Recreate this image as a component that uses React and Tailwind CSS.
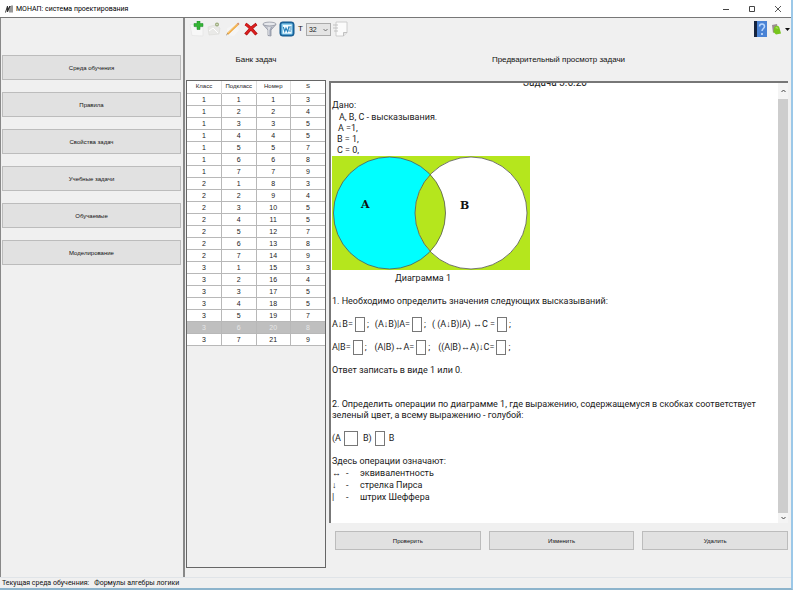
const menu = [
  "Среда обучения",
  "Правила",
  "Свойства задач",
  "Учебные задачи",
  "Обучаемые",
  "Моделирование",
];

const scores = [3, 4, 5, 5, 7, 8, 9];
const tasks = Array.from({ length: 21 }, (_, i) => ({
  group: Math.floor(i / 7) + 1,
  sub: (i % 7) + 1,
  number: i + 1,
  s: scores[i % 7],
}));

const selectedTask = 20;

function TitleBar() {
  return (
    <header className="flex h-[17px] shrink-0 items-center bg-white pl-[5px]">
      <svg className="h-2 w-2" viewBox="0 0 8 8" fill="none" stroke="#333" aria-hidden="true">
        <path d="M.5 7.500 2.500 1v6L5 1v6.500M2.500 5 5 1M7 .5v7" strokeWidth="1" />
      </svg>
      <h1 className="ml-[3px] font-['Roboto',sans-serif] text-[7px] leading-[10px] text-black">
        МОНАП: система проектирования
      </h1>
      <div className="ml-auto flex items-center">
        <button aria-label="Свернуть" className="flex h-4 w-[26px] items-center justify-center">
          <svg className="h-2 w-2" viewBox="0 0 8 8" stroke="#444" aria-hidden="true">
            <path d="M1 4.500h6" />
          </svg>
        </button>
        <button aria-label="Развернуть" className="flex h-4 w-[26px] items-center justify-center">
          <svg className="h-2 w-2" viewBox="0 0 8 8" fill="none" stroke="#444" aria-hidden="true">
            <path d="M1.500 1.500h5v5h-5z" />
          </svg>
        </button>
        <button aria-label="Закрыть" className="flex h-4 w-[26px] items-center justify-center">
          <svg className="h-2 w-2" viewBox="0 0 8 8" stroke="#444" strokeWidth=".9" aria-hidden="true">
            <path d="m1 1 6 6m0-6-6 6" />
          </svg>
        </button>
      </div>
    </header>
  );
}

function Tool({ label, children }) {
  return (
    <button aria-label={label} className="h-4 w-4">
      <svg className="h-4 w-4" viewBox="0 0 16 16" fill="none" aria-hidden="true">
        {children}
      </svg>
    </button>
  );
}

function Toolbar() {
  return (
    <div className="flex h-[22px] items-center pl-1 pr-px">
      <div className="flex items-center gap-[2px]">
        <Tool label="Добавить">
          <path d="M1 3.500h5v3h8V15L3 14.500z" fill="#f7f7f7" stroke="#e2e2e2" strokeWidth=".6" />
          <path d="M8 0h3v2.500h3v3h-3V8.500H8v-3H5v-3h3z" fill="#35b535" stroke="#168a25" strokeWidth=".5" />
        </Tool>
        <Tool label="Открыть">
          <path d="M1 6 8 4l5 3-1 6-10 1z" fill="#e9e9e7" stroke="#dadad6" strokeWidth=".6" />
          <path d="m2 10 4-3 5 5" stroke="#fff" />
          <circle cx="10" cy="3.500" r="2" fill="#9cab7c" />
          <circle cx="10" cy="3.500" r=".8" fill="#e4ebd8" />
        </Tool>
        <Tool label="Править">
          <path d="M2 7.500 10 3l4 6-5 6-7-1z" fill="#f5f5f5" />
          <path d="M2.500 13 12.500 3.500" stroke="#efa63c" strokeWidth="2.200" />
          <path d="m3 12 9.500-9" stroke="#fbe0a4" strokeWidth=".6" />
          <path d="m12.500 3.500 1.300-1.200" stroke="#d58b63" strokeWidth="2" />
          <path d="m1.300 14 1.500-1.300" stroke="#8a8177" />
        </Tool>
        <Tool label="Удалить задачу">
          <path d="M2.500 3c3 2 7 6 11 10.500M13.500 3C9.500 5.500 6 9 2.500 13.500" stroke="#a80d0d" strokeWidth="3.200" />
          <path d="M2.500 3.200c3 2 7 6 10.500 10M13 3.300C9.500 6 6 9 3 13" stroke="#dc1f1f" strokeWidth="2" />
        </Tool>
        <Tool label="Фильтр">
          <path d="M2 3.500 7 9v5.500L10 15V9l5-5.500z" fill="#c6c9d1" stroke="#7e8493" strokeWidth=".7" />
          <ellipse cx="8.500" cy="3" rx="6.500" ry="1.900" fill="#e6e8ec" stroke="#868b98" strokeWidth=".7" />
          <path d="M8 6v8" stroke="#f2f3f5" />
          <path d="m11 6-2 3v5" stroke="#8389a0" strokeWidth=".7" />
        </Tool>
        <Tool label="Экспорт в Word">
          <rect x="1" y="1" width="14" height="14" rx="2.500" fill="#1d6ea9" stroke="#11568b" />
          <rect x="2.500" y="2.500" width="11" height="11" rx="1" fill="#8fd0ee" />
          <path d="M4 4h8.500v8.500H4z" fill="#f2fbff" />
          <path d="m4.300 6 1.500 4.500L7 7l1.500 3.500L10 6M9 6h3.500M10.500 8h2m-3 2h2.500" stroke="#2682bb" strokeWidth="1.100" />
        </Tool>
      </div>
      <label htmlFor="size" className="ml-[3px] text-[8px] leading-[10px] text-[#222]">T</label>
      <div className="relative ml-[3px]">
        <select
          id="size"
          defaultValue="32"
          className="block h-[13px] w-[25px] appearance-none border border-[#aaa] bg-[#e4e4e4] pl-[2px] text-[7px] leading-[11px] text-[#222]"
        >
          <option>32</option>
        </select>
        <svg className="pointer-events-none absolute right-[3px] top-[5px] h-1 w-[5px]" viewBox="0 0 5 4" fill="none" stroke="#555" strokeWidth=".8" aria-hidden="true">
          <path d="m.5 1 2 2 2-2" />
        </svg>
      </div>
      <div className="ml-px flex">
        <Tool label="Документ">
          <path d="M4 1h11v10.500L11.500 15H4z" fill="#fbfbfb" stroke="#c4c4c4" strokeWidth=".8" />
          <path d="M11.500 15v-3.500H15" fill="#e4e4e4" stroke="#b5b5b5" strokeWidth=".8" />
          <path d="M1 4h5M1 7h5M2 10h4" stroke="#c2c2c2" />
        </Tool>
      </div>
      <div className="ml-auto flex items-center">
        <button aria-label="Справка">
          <svg className="h-4 w-[13px]" viewBox="0 0 13 16" aria-hidden="true">
            <path d="M0 0h13v16H0z" fill="#4a83d5" />
            <path d="M0 0h3v16H0z" fill="#15233d" />
            <path d="M5.500 5.500C5.500 2 10.500 2 10.500 5.500c0 2-2.500 2-2.500 4.500" fill="none" stroke="#b9d8ff" strokeWidth="1.500" />
            <circle cx="8" cy="13" r="1" fill="#d8eaff" />
          </svg>
        </button>
        <button aria-label="Выход" className="ml-1 flex items-center gap-1">
          <svg className="h-3 w-[10px]" viewBox="0 0 10 12" aria-hidden="true">
            <path d="M1 2 6 1l1 6-5 3z" fill="#9b8d91" />
            <path d="M3 5c1-3 5-3 5.500 0L10 10.500 5 11.500 2.500 9z" fill="#77c51c" />
            <path d="m4 5 2-1.500L7.500 6" fill="#a8df57" />
          </svg>
          <svg className="h-[3px] w-[5px]" viewBox="0 0 5 3" aria-hidden="true">
            <path d="M0 0h5L2.500 3z" fill="#111" />
          </svg>
        </button>
      </div>
    </div>
  );
}

function TaskTable() {
  return (
    <div className="flex-1 border border-[#666] bg-[#f0f0f0]">
      <table className="w-full table-fixed border-collapse bg-white text-center text-[7px] leading-[11px] text-[#222]">
        <thead>
          <tr className="h-3 border-b border-[#bbb] text-[6px]">
            {["Класс", "Подкласс", "Номер", "S"].map((name) => (
              <th key={name} className="border-r border-[#ddd] p-0 font-normal last:border-r-0">{name}</th>
            ))}
          </tr>
        </thead>
        <tbody>
          {tasks.map((t) => (
            <tr
              key={t.number}
              className={`h-3 border-b border-[#b8b8b8] ${t.number === selectedTask ? "bg-[#bfbfbf] text-[#e6e6e6]" : ""}`}
            >
              {[t.group, t.sub, t.number, t.s].map((value, i) => (
                <td key={i} className="border-r border-[#b8b8b8] p-0 last:border-r-0">{value}</td>
              ))}
            </tr>
          ))}
        </tbody>
      </table>
    </div>
  );
}

function Venn() {
  return (
    <svg className="h-[114px] w-[198px]" viewBox="0 0 198 114" role="img" aria-label="Диаграмма 1">
      <path d="M0 0h198v114H0z" fill="#b5e61d" />
      <circle cx="57.500" cy="57" r="56" fill="#00ffff" />
      <circle cx="139" cy="57" r="56" fill="#fff" />
      <path d="M98.300 18.600a56 56 0 0 1 0 76.800a56 56 0 0 1 0-76.800z" fill="#b5e61d" />
      <g fill="none" stroke="#555" strokeWidth=".8">
        <circle cx="57.500" cy="57" r="56" />
        <circle cx="139" cy="57" r="56" />
      </g>
      <g fontFamily="DejaVu Serif, serif" fontSize="11" fontWeight="bold" fill="#111">
        <text x="29" y="52">A</text>
        <text x="128" y="53">B</text>
      </g>
    </svg>
  );
}

function Answer({ label, wide }) {
  return (
    <input
      aria-label={label}
      className={`h-[15px] border border-[#777] bg-white text-center text-[9px] ${wide ? "w-[14px]" : "w-[10px]"}`}
    />
  );
}

function Formula({ text }) {
  return (
    <label className="flex items-center gap-[2px] whitespace-pre">
      {text}
      <Answer label={text} />
      <span>;</span>
    </label>
  );
}

function Preview() {
  return (
    <section className="flex min-h-0 flex-1 border-l-2 border-t-2 border-[#777] bg-white">
      <div className="min-w-0 flex-1 overflow-hidden pl-px font-['Roboto','Liberation_Sans',sans-serif] text-[9px] leading-[11px] text-[#1a1a1a]">
        <h3 className="-mt-[6px] text-center text-[10px]">Задача 3.6.20</h3>
        <div className="mt-3">
          <p>Дано:</p>
          <p className="mt-px pl-[7px]">A, B, C - высказывания.</p>
          <p className="pl-[6px]">A =1,</p>
          <p className="pl-[5px]">B = 1,</p>
          <p className="pl-[5px]">C = 0,</p>
        </div>
        <figure className="w-[198px]">
          <Venn />
          <figcaption className="mt-[3px] pr-4 text-center">Диаграмма 1</figcaption>
        </figure>
        <p className="mt-3">1. Необходимо определить значения следующих высказываний:</p>
        <div className="mt-[10px] flex gap-[6px]">
          <Formula text="A↓B=" />
          <Formula text="(A↓B)|A=" />
          <Formula text="( (A↓B)|A) ↔C =" />
        </div>
        <div className="mt-2 flex gap-2">
          <Formula text="A|B=" />
          <Formula text="(A|B)↔A=" />
          <Formula text="((A|B)↔A)↓C=" />
        </div>
        <p className="mt-[10px]">Ответ записать в виде 1 или 0.</p>
        <p className="mt-[23px]">
          2. Определить операции по диаграмме 1, где выражению, содержащемуся в скобках соответствует зеленый цвет, а всему выражению - голубой:
        </p>
        <div className="mt-[10px] flex items-center gap-[3px]">
          <span>(A</span>
          <Answer label="Первая операция" wide />
          <span className="pl-[2px]">B)</span>
          <Answer label="Вторая операция" />
          <span className="pl-px">B</span>
        </div>
        <p className="mt-[10px]">Здесь операции означают:</p>
        <dl className="grid grid-cols-[28px_1fr] leading-3">
          <dt className="flex"><span className="w-[14px]">↔</span>-</dt>
          <dd>эквивалентность</dd>
          <dt className="flex"><span className="w-[14px]">↓</span>-</dt>
          <dd>стрелка Пирса</dd>
          <dt className="flex"><span className="w-[14px]">|</span>-</dt>
          <dd>штрих Шеффера</dd>
        </dl>
      </div>
      <div className="flex w-[10px] flex-col bg-[#f4f4f4]">
        <button aria-label="Вверх" className="flex h-4 items-center justify-center">
          <svg className="h-1 w-[5px]" viewBox="0 0 5 4" fill="none" stroke="#444" aria-hidden="true">
            <path d="m.5 3 2-2 2 2" />
          </svg>
        </button>
        <div className="flex-1 bg-[#cdcdcd]" />
        <button aria-label="Вниз" className="flex h-[10px] items-center justify-center">
          <svg className="h-1 w-[5px]" viewBox="0 0 5 4" fill="none" stroke="#444" aria-hidden="true">
            <path d="m.5 1 2 2 2-2" />
          </svg>
        </button>
      </div>
    </section>
  );
}

export default function App() {
  return (
    <div className="flex h-screen flex-col border-b-2 border-r-2 border-b-[#8db4cc] border-r-[#9cc8e8] bg-[#f0f0f0] font-['Liberation_Sans',sans-serif]">
      <TitleBar />
      <div className="flex min-h-0 flex-1 border-t border-[#777]">
        <nav className="flex w-[184px] shrink-0 flex-col gap-3 border-x border-[#888] px-px pr-[2px] pt-[37px]">
          {menu.map((item) => (
            <button key={item} className="h-[25px] border border-[#bcbcbc] bg-[#e1e1e1] text-[6px] leading-[10px] text-[#111]">
              {item}
            </button>
          ))}
        </nav>
        <main className="flex min-w-0 flex-1 flex-col border-l border-[#888]">
          <Toolbar />
          <div className="flex min-h-0 flex-1 pl-px pr-[3px]">
            <section className="flex w-[140px] shrink-0 flex-col pb-[9px]">
              <h2 className="h-10 pt-[15px] text-center text-[8px] leading-[10px] text-[#111]">Банк задач</h2>
              <TaskTable />
            </section>
            <div className="ml-[3px] flex min-w-0 flex-1 flex-col">
              <h2 className="h-[41px] shrink-0 pt-[15px] text-center text-[8px] leading-[10px] text-[#111]">
                Предварительный просмотр задачи
              </h2>
              <Preview />
              <div className="mb-[27px] mt-2 grid grid-cols-3 gap-2 pl-[6px]">
                {["Проверить", "Изменить", "Удалить"].map((item) => (
                  <button key={item} className="h-[19px] border border-[#bcbcbc] bg-[#e1e1e1] text-[6px] leading-[10px] text-[#111]">
                    {item}
                  </button>
                ))}
              </div>
            </div>
          </div>
        </main>
      </div>
      <footer className="flex h-[11px] shrink-0 items-center gap-[5px] border-t border-[#e0e4e8] pl-[2px] font-['Roboto',sans-serif] text-[7px] leading-[10px] text-[#111]">
        <span>Текущая среда обученния:</span>
        <span>Формулы алгебры логики</span>
      </footer>
    </div>
  );
}
